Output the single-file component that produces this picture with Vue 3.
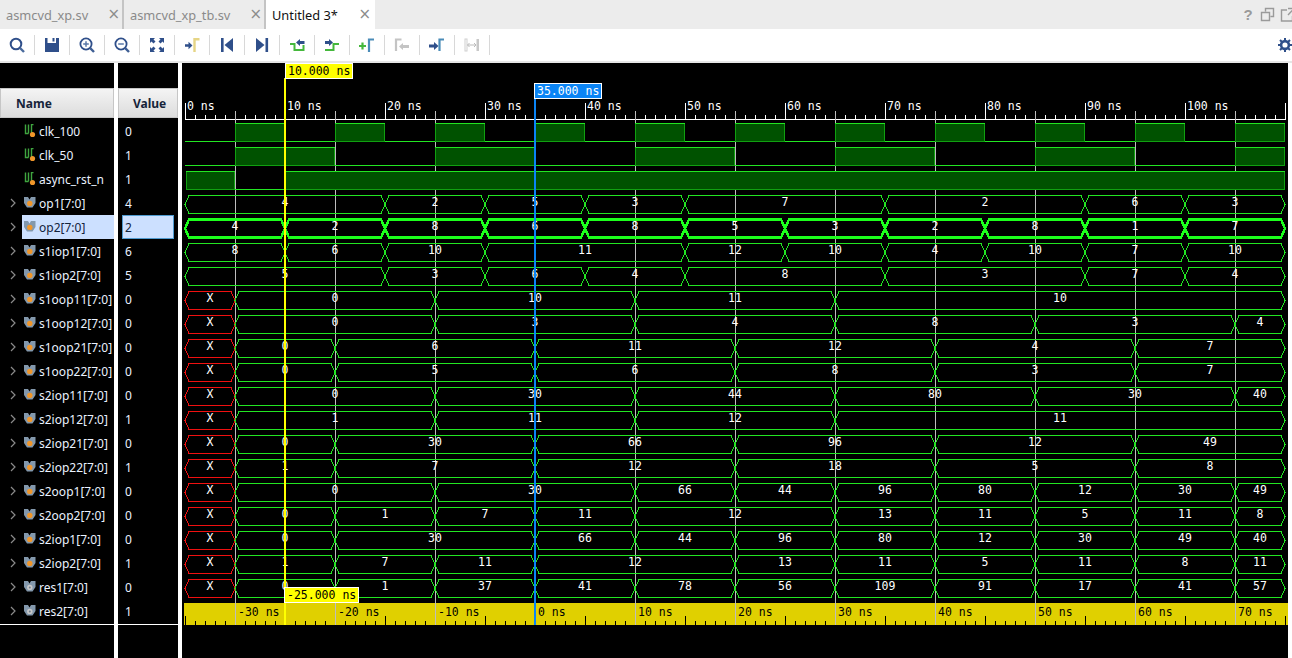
<script setup>
const names = [
  ['clk_100','0','s'],['clk_50','1','s'],['async_rst_n','1','s'],['op1[7:0]','4','b'],['op2[7:0]','2','b'],
  ['s1iop1[7:0]','6','b'],['s1iop2[7:0]','5','b'],['s1oop11[7:0]','0','b'],['s1oop12[7:0]','0','b'],
  ['s1oop21[7:0]','0','b'],['s1oop22[7:0]','0','b'],['s2iop11[7:0]','0','b'],['s2iop12[7:0]','1','b'],
  ['s2iop21[7:0]','0','b'],['s2iop22[7:0]','1','b'],['s2oop1[7:0]','0','b'],['s2oop2[7:0]','0','b'],
  ['s2iop1[7:0]','0','b'],['s2iop2[7:0]','1','b'],['res1[7:0]','0','g'],['res2[7:0]','1','g']
].map(([name, value, kind], i) => ({ name, value, kind, selected: i === 4 }))

const buses = [
  [3,'4:385 2:485 5:585 3:685 7:885 2:1085 6:1185 3:1285'],
  [4,'4:285 2:385 8:485 6:585 8:685 5:785 3:885 2:985 8:1085 1:1185 7:1285'],
  [5,'8:285 6:385 10:485 11:685 12:785 10:885 4:985 10:1085 7:1185 10:1285'],
  [6,'5:385 3:485 6:585 4:685 8:885 3:1085 7:1185 4:1285'],
  [7,'X:235 0:435 10:635 11:835 10:1285'],
  [8,'X:235 0:435 3:635 4:835 8:1035 3:1235 4:1285'],
  [9,'X:235 0:335 6:535 11:735 12:935 4:1135 7:1285'],
  [10,'X:235 0:335 5:535 6:735 8:935 3:1135 7:1285'],
  [11,'X:235 0:435 30:635 44:835 80:1035 30:1235 40:1285'],
  [12,'X:235 1:435 11:635 12:835 11:1285'],
  [13,'X:235 0:335 30:535 66:735 96:935 12:1135 49:1285'],
  [14,'X:235 1:335 7:535 12:735 18:935 5:1135 8:1285'],
  [15,'X:235 0:435 30:635 66:735 44:835 96:935 80:1035 12:1135 30:1235 49:1285'],
  [16,'X:235 0:335 1:435 7:535 11:635 12:835 13:935 11:1035 5:1135 11:1235 8:1285'],
  [17,'X:235 0:335 30:535 66:635 44:735 96:835 80:935 12:1035 30:1135 49:1235 40:1285'],
  [18,'X:235 1:335 7:435 11:535 12:735 13:835 11:935 5:1035 11:1135 8:1235 11:1285'],
  [19,'X:235 0:335 1:435 37:535 41:635 78:735 56:835 109:935 91:1035 17:1135 41:1235 57:1285']
]

const segments = []
for (const [row, spec] of buses) {
  const top = 119 + 24 * row + 4.5
  const mid = top + 9
  const bot = top + 18
  let start = 185
  for (const part of spec.split(' ')) {
    const [label, endText] = part.split(':')
    const end = Number(endText)
    segments.push({
      key: row + '-' + start,
      label,
      x: (start + end) / 2,
      y: top + 10.5,
      points: `${start},${mid} ${start + 4},${top} ${end - 4},${top} ${end},${mid} ${end - 4},${bot} ${start + 4},${bot}`,
      cls: label === 'X' ? 'seg-x' : row === 4 ? 'seg-sel' : 'seg'
    })
    start = end
  }
}

const highs = []
for (let x = 235; x < 1285; x += 100) highs.push({ key: 'a' + x, x, y: 123.5, w: 50 })
for (let x = 235; x < 1285; x += 200) highs.push({ key: 'b' + x, x, y: 147.5, w: Math.min(100, 1285 - x) })
highs.push({ key: 'c1', x: 186, y: 171.5, w: 49 }, { key: 'c2', x: 285, y: 171.5, w: 1000 })

const lows = 'M185 141.5H235M285 141.5H335M385 141.5H435M485 141.5H535M585 141.5H635M685 141.5H735M785 141.5H835M885 141.5H935M985 141.5H1035M1085 141.5H1135M1185 141.5H1235'
  + 'M185 165.5H235M335 165.5H435M535 165.5H635M735 165.5H835M935 165.5H1035M1135 165.5H1235M235 189.5H285'

const grid = []
for (let x = 235; x < 1285; x += 100) grid.push(x + 0.5)

let topTicks = 'M185 119.5H1286'
let botTicks = ''
for (let x = 185; x <= 1285; x += 10) {
  const off = (x - 185) % 100
  if (off === 0) {
    topTicks += `M${x + 0.5} 103V119`
    botTicks += `M${x + 0.5} 616V625`
  } else if (off !== 50) {
    topTicks += `M${x + 0.5} 115V119`
    botTicks += `M${x + 0.5} 621V625`
  }
}

const topLabels = []
for (let i = 0; i <= 10; i++) topLabels.push({ x: 187 + i * 100, text: i * 10 + ' ns' })
const botLabels = []
for (let i = 0; i <= 10; i++) botLabels.push({ x: 238 + i * 100, text: (i - 3) * 10 + ' ns' })
</script>

<template>
  <div class="app">
    <div class="tabs">
      <div class="tab tab-one"><span class="tab-text">asmcvd_xp.sv</span><span class="close">×</span></div>
      <div class="tab tab-two"><span class="tab-text">asmcvd_xp_tb.sv</span><span class="close">×</span></div>
      <div class="tab tab-active"><span class="tab-text">Untitled 3*</span><span class="close">×</span></div>
      <div class="window-icons">
        <span class="help">?</span>
        <svg width="16" height="16" viewBox="0 0 16 16"><path d="M5.5 4.5V1.5H13.5V9.5H10.5M1.5 5.5H9.5V13.5H1.5Z" fill="none" stroke="#9a9a9a" stroke-width="1.4"/></svg>
        <svg width="16" height="16" viewBox="0 0 16 16"><path d="M7 3H1.5V14H12.5V9M8 1.5H14V7.5M14 1.5L8 8" fill="none" stroke="#9a9a9a" stroke-width="1.4"/></svg>
      </div>
    </div>

    <div class="toolbar">
      <div class="btn"><svg width="18" height="18" viewBox="0 0 18 18"><circle cx="8" cy="8" r="5.3" fill="none" stroke="#2f4f8a" stroke-width="2"/><path d="M12 12L16 16" stroke="#4a6a9c" stroke-width="2.4"/></svg></div>
      <div class="btn"><svg width="18" height="18" viewBox="0 0 18 18"><path d="M2 2H4.5V7H13V2H16V16H2Z" fill="#2f4f8a"/><rect x="9.5" y="2" width="2" height="3.5" fill="#2f4f8a"/></svg></div>
      <div class="btn"><svg width="18" height="18" viewBox="0 0 18 18"><circle cx="8" cy="8" r="5.6" fill="none" stroke="#2f4f8a" stroke-width="1.8"/><path d="M5.2 8H10.8M8 5.2V10.8" stroke="#5a78a8" stroke-width="1.5"/><path d="M12.2 12.2L16 16" stroke="#3f5f94" stroke-width="2.4"/></svg></div>
      <div class="btn"><svg width="18" height="18" viewBox="0 0 18 18"><circle cx="8" cy="8" r="5.6" fill="none" stroke="#2f4f8a" stroke-width="1.8"/><path d="M5.2 8H10.8" stroke="#5a78a8" stroke-width="1.5"/><path d="M12.2 12.2L16 16" stroke="#3f5f94" stroke-width="2.4"/></svg></div>
      <div class="btn"><svg width="18" height="18" viewBox="0 0 18 18"><g fill="#2f4f8a"><path d="M2 2H7L5.5 3.5L7.5 5.5L5.5 7.5L3.5 5.5L2 7Z"/><path d="M16 2H11L12.5 3.5L10.5 5.5L12.5 7.5L14.5 5.5L16 7Z"/><path d="M2 16H7L5.5 14.5L7.5 12.5L5.5 10.5L3.5 12.5L2 11Z"/><path d="M16 16H11L12.5 14.5L10.5 12.5L12.5 10.5L14.5 12.5L16 11Z"/></g></svg></div>
      <div class="btn"><svg width="18" height="18" viewBox="0 0 18 18"><path d="M2 8.2H5.5V5.8L9.5 9.5L5.5 13.2V10.8H2Z" fill="#2f4f8a"/><path d="M11.5 16V3.2H16.5" fill="none" stroke="#e6d585" stroke-width="2.4"/></svg></div>
      <div class="btn"><svg width="18" height="18" viewBox="0 0 18 18"><rect x="3" y="2" width="2.6" height="14" fill="#2f4f8a"/><path d="M15 2V16L6.5 9Z" fill="#2f4f8a"/></svg></div>
      <div class="btn"><svg width="18" height="18" viewBox="0 0 18 18"><path d="M3 2V16L11.5 9Z" fill="#2f4f8a"/><rect x="12.5" y="2" width="2.6" height="14" fill="#2f4f8a"/></svg></div>
      <div class="btn"><svg width="18" height="18" viewBox="0 0 18 18"><path d="M2 8H6.5V14H15.5V9" fill="none" stroke="#45b83c" stroke-width="2"/><path d="M8 6.5L12 3V5H16.5V8H12V10Z" fill="#2f4f8a"/></svg></div>
      <div class="btn"><svg width="18" height="18" viewBox="0 0 18 18"><path d="M2 14H10.5V8H16" fill="none" stroke="#45b83c" stroke-width="2"/><path d="M10 6.5L6 3V5H2V8H6V10Z" fill="#2f4f8a"/></svg></div>
      <div class="btn"><svg width="18" height="18" viewBox="0 0 18 18"><path d="M1 10H8M4.5 6.5V13.5" stroke="#45b83c" stroke-width="2.2"/><path d="M11 16V3.5H16" fill="none" stroke="#4a8cb8" stroke-width="2.2"/></svg></div>
      <div class="btn"><svg width="18" height="18" viewBox="0 0 18 18"><path d="M3 15V3.5H8.5" fill="none" stroke="#c4c4c4" stroke-width="2.2"/><path d="M6 10.5L10 7V9H16V12H10V14Z" fill="#c4c4c4"/></svg></div>
      <div class="btn"><svg width="18" height="18" viewBox="0 0 18 18"><path d="M1 8.5H6V6L10.5 10L6 14V11.5H1Z" fill="#2f4f8a"/><path d="M11.5 15V3.5H16" fill="none" stroke="#4a8cb8" stroke-width="2.2"/></svg></div>
      <div class="btn"><svg width="18" height="18" viewBox="0 0 18 18"><rect x="2" y="3" width="2" height="12" fill="none" stroke="#cfcfcf" stroke-width="1"/><rect x="13.5" y="3" width="2.5" height="12" fill="#c8c8c8"/><path d="M4.5 9H13M6.5 7L4.5 9L6.5 11M11 7L13 9L11 11" fill="none" stroke="#bbbbbb" stroke-width="1"/></svg></div>
      <div class="gear">
        <svg width="14" height="14" viewBox="0 0 14 14"><circle cx="7" cy="7" r="3.9" fill="none" stroke="#2f4f8a" stroke-width="2.6"/><path d="M7 0V3M7 11V14M0 7H3M11 7H14M2 2L4 4M10 10L12 12M12 2L10 4M4 10L2 12" stroke="#2f4f8a" stroke-width="2"/></svg>
      </div>
    </div>

    <div class="main">
      <div class="col col-names">
        <div class="col-head">Name</div>
        <div class="col-list">
          <div v-for="row in names" :key="row.name" class="row">
            <span class="chev">
              <svg v-if="row.kind !== 's'" width="6" height="10" viewBox="0 0 6 10"><path d="M1 1L5 5L1 9" fill="none" stroke="#8a8a8a" stroke-width="1.2"/></svg>
            </span>
            <div class="name" :class="{ 'name-sel': row.selected }">
              <svg v-if="row.kind === 's'" class="sig" width="14" height="14" viewBox="0 0 14 14">
                <path d="M2.5 0.5V9.5H5.5M5.5 9.5V0.5M8.5 9V0.5H10.5" fill="none" stroke="#3fa53f" stroke-width="1.4"/>
                <circle cx="9.5" cy="10.5" r="2.6" fill="#f0962a"/>
              </svg>
              <svg v-else class="sig" width="14" height="14" viewBox="0 0 14 14">
                <path d="M1 1H5L6.5 3.5L8 1H12.5V7L9.5 11.5H4L1 7Z" fill="#8398ac"/>
                <circle cx="6.8" cy="7.4" r="2.7" :fill="row.kind === 'g' ? '#c8c8c8' : '#f0962a'"/>
                <circle v-if="row.kind === 'g'" cx="6.8" cy="7.4" r="1" fill="#6f7f8f"/>
              </svg>
              <span class="name-text">{{ row.name }}</span>
            </div>
          </div>
        </div>
      </div>

      <div class="col col-values">
        <div class="col-head col-head-value">Value</div>
        <div class="col-list">
          <div v-for="row in names" :key="row.name" class="row">
            <div class="value" :class="{ 'value-sel': row.selected }">{{ row.value }}</div>
          </div>
        </div>
      </div>

      <div class="col col-wave">
        <svg class="wave" width="1106" height="595" viewBox="182 63 1106 595">
          <rect x="182" y="63" width="1106" height="595" fill="#000"/>
          <path :d="topTicks" class="tick-white"/>
          <text v-for="l in topLabels" :key="l.text" :x="l.x" y="110" class="mono white">{{ l.text }}</text>

          <line v-for="x in grid" :key="x" :x1="x" :x2="x" y1="111" y2="625" class="grid"/>

          <path :d="lows" class="low"/>
          <g v-for="h in highs" :key="h.key">
            <rect :x="h.x + 0.5" :y="h.y" :width="h.w - 1" height="18" class="high"/>
            <line :x1="h.x" :x2="h.x + h.w" :y1="h.y" :y2="h.y" class="high-top"/>
          </g>

          <polygon v-for="s in segments" :key="s.key" :points="s.points" :class="s.cls"/>
          <text v-for="s in segments" :key="'t' + s.key" :x="s.x" :y="s.y" class="mono white mid">{{ s.label }}</text>

          <rect x="184" y="603" width="1104" height="22" class="ruler"/>
          <path :d="botTicks" class="tick-black"/>
          <text v-for="l in botLabels" :key="l.text" :x="l.x" y="615.5" class="mono dark">{{ l.text }}</text>
          <line v-for="x in grid" :key="'b' + x" :x1="x" :x2="x" y1="603" y2="625" class="grid"/>

          <rect x="534" y="98" width="2" height="527" fill="#0a84f5"/>
          <rect x="284" y="78" width="2" height="547" fill="#ffff00"/>

          <rect x="285.5" y="63.5" width="67" height="15" class="flag-yellow"/>
          <text x="288" y="74.5" class="mono dark">10.000 ns</text>
          <rect x="534.5" y="83.5" width="67" height="15" class="flag-blue"/>
          <text x="537" y="94.5" class="mono white">35.000 ns</text>
          <rect x="284.5" y="587.5" width="74" height="15" class="flag-yellow"/>
          <text x="287" y="598.5" class="mono dark">-25.000 ns</text>
        </svg>
      </div>
    </div>
  </div>
</template>

<style scoped>
.app {
  width: 1292px;
  height: 658px;
  display: flex;
  flex-direction: column;
  overflow: hidden;
  background: #fff;
  font-family: "Noto Sans", sans-serif;
}
.tabs {
  height: 29px;
  display: flex;
  align-items: stretch;
  background: #ececec;
  font-size: 12.8px;
  color: #8a8a8a;
}
.tab {
  display: flex;
  align-items: center;
  justify-content: space-between;
  box-sizing: border-box;
  padding-left: 6px;
  padding-right: 2px;
  border-right: 2px solid #c4c4c4;
}
.tab-one { width: 124px; }
.tab-two { width: 142px; }
.tab-active {
  width: 109px;
  background: #fff;
  color: #111;
  border-right: none;
  padding-right: 4px;
}
.close {
  font-family: "DejaVu Sans", sans-serif;
  font-size: 15px;
  color: #8c8c8c;
  line-height: 1;
}
.window-icons {
  margin-left: auto;
  display: flex;
  align-items: center;
  gap: 4px;
  margin-right: -4px;
}
.help {
  font-family: "Liberation Sans", sans-serif;
  font-weight: 700;
  font-size: 15px;
  color: #9a9a9a;
  width: 16px;
  text-align: center;
}
.toolbar {
  height: 32px;
  box-sizing: content-box;
  display: flex;
  align-items: center;
  background: #fff;
  border-bottom: 2px solid #e6e6e6;
}
.btn {
  width: 35px;
  height: 20px;
  box-sizing: border-box;
  flex: none;
  display: flex;
  align-items: center;
  justify-content: center;
  border-right: 1px solid #d8d8d8;
}
.gear {
  margin-left: auto;
  display: flex;
}
.main {
  flex: 1;
  display: flex;
  background: #fff;
}
.col {
  display: flex;
  flex-direction: column;
  background: #000;
  flex: none;
  padding-top: 25px;
  box-sizing: border-box;
}
.col-names { width: 114px; margin-right: 4px; }
.col-values { width: 60px; margin-right: 4px; }
.col-wave { width: 1106px; padding-top: 0; }
.col-head {
  height: 30px;
  box-sizing: border-box;
  margin-bottom: 1px;
  display: flex;
  align-items: center;
  padding-left: 15px;
  font-weight: 700;
  font-size: 12px;
  color: #16243a;
  background: linear-gradient(#f4f4f4, #dcdcdc);
  border: 1px solid #c6c6c6;
}
.col-head-value { padding-left: 14px; }
.col-list {
  height: 506px;
  box-sizing: border-box;
  border-bottom: 1px solid #fff;
}
.row {
  height: 24px;
  display: flex;
  align-items: stretch;
  font-size: 12px;
  color: #eaf2ff;
}
.chev {
  width: 22px;
  flex: none;
  display: flex;
  align-items: center;
  padding-left: 10px;
  box-sizing: border-box;
}
.name {
  flex: 1;
  display: flex;
  align-items: center;
  white-space: nowrap;
}
.name-sel {
  background: #cce0ff;
  color: #12233c;
}
.sig {
  margin-left: 1px;
  margin-right: 2px;
  flex: none;
}
.value {
  flex: 1;
  margin: 0 4px;
  box-sizing: border-box;
  border: 1px solid transparent;
  padding-left: 2px;
  display: flex;
  align-items: center;
}
.value-sel {
  background: #cce0ff;
  border-color: #4f9bd0;
  color: #12233c;
}
.wave { display: block; }
.mono {
  font-family: "DejaVu Sans Mono", monospace;
  font-size: 11.5px;
}
.white { fill: #fff; }
.dark { fill: #000; }
.mid { text-anchor: middle; }
.tick-white { stroke: #fff; fill: none; shape-rendering: crispEdges; }
.tick-black { stroke: #000; fill: none; shape-rendering: crispEdges; }
.grid { stroke: #bdbdbd; shape-rendering: crispEdges; }
.low { stroke: #22e622; fill: none; shape-rendering: crispEdges; }
.high { fill: #005200; stroke: #10a010; shape-rendering: crispEdges; }
.high-top { stroke: #22e622; shape-rendering: crispEdges; }
.seg { fill: none; stroke: #22e622; shape-rendering: crispEdges; }
.seg-x { fill: none; stroke: #f01010; shape-rendering: crispEdges; }
.seg-sel { fill: none; stroke: #1cff1c; stroke-width: 2.4; shape-rendering: crispEdges; }
.ruler { fill: #e0d000; }
.flag-yellow { fill: #ffff00; stroke: #fff; shape-rendering: crispEdges; }
.flag-blue { fill: #0a84f5; stroke: #fff; shape-rendering: crispEdges; }
</style>

<style>
html, body {
  margin: 0;
  background: #000;
  overflow: hidden;
}
</style>
